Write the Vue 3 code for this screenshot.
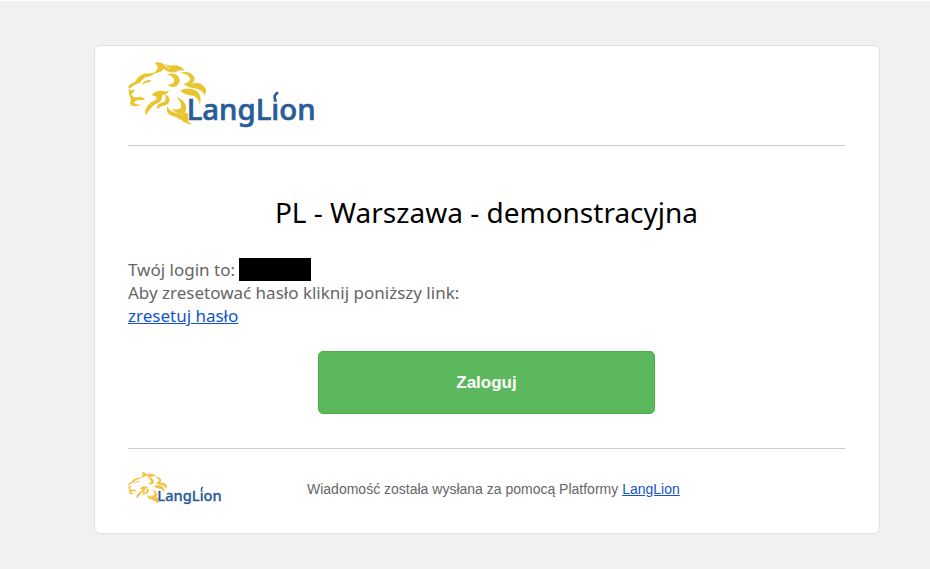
<template>
  <div class="page">
    <main class="card">
      <header class="card-header">
        <svg class="logo" viewBox="24 15 570 210" role="img" aria-label="LangLion">
          <g class="lion">
            <path v-for="(d, i) in lionPaths" :key="i" :d="d" />
          </g>
          <text class="logo-text" x="200" y="196">LangLion</text>
          <circle class="dot-cover" cx="467" cy="125" r="14" />
          <path class="dot-arc" d="M474 112 Q457 122 468 138" />
        </svg>
      </header>

      <section class="content">
        <h1>PL - Warszawa - demonstracyjna</h1>
        <p>
          Twój login to: <span class="redacted"></span><br />
          Aby zresetować hasło kliknij poniższy link:<br />
          <a href="#">zresetuj hasło</a>
        </p>
        <button type="button" class="login">Zaloguj</button>
      </section>

      <footer class="card-footer">
        <svg class="logo-small" viewBox="24 15 570 210" role="img" aria-label="LangLion">
          <g class="lion">
            <path v-for="(d, i) in lionPaths" :key="i" :d="d" />
          </g>
          <text class="logo-text" x="200" y="196">LangLion</text>
          <circle class="dot-cover" cx="467" cy="125" r="14" />
          <path class="dot-arc" d="M474 112 Q457 122 468 138" />
        </svg>
        <span>Wiadomość została wysłana za pomocą Platformy <a href="#">LangLion</a></span>
      </footer>
    </main>
  </div>
</template>

<script setup>
// face first, then the mane from top to bottom
const lionPaths = [
  'M25 97 Q26 86 45 81 Q54 62 76 55 Q95 57 106 52 Q100 64 78 66 Q66 73 60 83 Q44 88 34 97 Q27 104 25 97Z',
  'M69 83 Q78 72 94 76 Q91 84 76 83 L66 91Z',
  'M26 103 Q36 110 44 101 Q43 113 34 116 Q37 128 50 127 Q64 123 75 131 Q72 138 56 135 Q42 137 43 145 Q54 152 66 147 Q52 158 36 152 Q27 148 33 133 Q26 122 26 103Z',
  'M104 24 Q124 17 137 34 Q144 43 160 41 Q148 50 130 42 Q125 54 97 55 Q112 48 113 38 Q113 29 104 24Z',
  'M134 25 Q143 35 160 31 Q180 30 195 47 Q178 43 168 51 Q150 55 135 45 Q147 46 154 41 Q141 38 134 25Z',
  'M140 57 Q166 51 177 67 Q184 84 169 94 Q154 100 142 89 Q162 90 163 76 Q161 64 140 57Z',
  'M180 53 Q210 45 222 65 Q228 79 213 86 Q244 78 256 100 Q262 111 253 120 Q247 105 230 101 Q207 99 190 87 Q208 84 210 72 Q208 57 180 53Z',
  'M180 106 Q207 94 231 108 Q248 125 239 149 Q238 130 219 122 Q195 122 180 106Z',
  'M94 121 Q107 103 129 108 Q141 112 147 105 Q145 118 127 121 Q127 142 107 147 Q91 158 78 181 Q70 169 83 152 Q91 140 109 134 Q113 123 94 121Z',
  'M135 119 Q151 121 148 140 Q143 151 127 153 Q115 158 111 163 Q109 145 131 141 Q140 137 135 119Z',
  'M169 125 Q194 134 198 155 Q201 174 181 178 Q166 174 155 162 Q175 166 183 158 Q186 143 169 125Z',
  'M142 154 Q147 168 165 173 Q187 176 195 188 Q203 201 218 208 Q196 207 185 196 Q168 185 151 181 Q137 172 142 154Z',
  'M184 177 Q197 169 205 177 Q202 185 207 199 Q190 192 184 177Z'
]
</script>

<style>
body {
  margin: 0;
  background: #f1f1f1;
}
</style>

<style scoped>
.page {
  padding: 44px 50px 35px 94px;
  border-top: 1px solid #fff;
  font-family: 'Lucida Grande', 'Noto Sans', sans-serif;
  color: #666;
}

.card {
  padding: 0 34px 0 33px;
  border: 1px solid #e0e0e0;
  border-radius: 6px;
  background: #fff;
}

.card-header {
  padding: 14px 0 15px;
  border-bottom: 1px solid #ccc;
}

.logo,
.logo-small {
  display: block;
  width: 190px;
  height: 70px;
}

.logo-small {
  width: 95px;
  height: 35px;
}

.lion {
  fill: #e8c531;
}

.logo-small .lion {
  fill: #f3c044;
}

.logo-text {
  font-family: 'Noto Sans', sans-serif;
  font-size: 88px;
  font-weight: 500;
  fill: #2a5c9a;
  stroke: #2a5c9a;
  stroke-width: 2px;
}

.dot-cover {
  fill: #fff;
}

.dot-arc {
  fill: none;
  stroke: #2a5c9a;
  stroke-width: 8px;
}

.content {
  padding: 46px 0 34px;
  border-bottom: 1px solid #ccc;
}

h1 {
  margin: 0 0 26px;
  font-size: 28px;
  font-weight: 400;
  line-height: 40px;
  text-align: center;
  color: #000;
}

p {
  margin: 0 0 24px;
  font-size: 17px;
  line-height: 23px;
}

a {
  color: #15c;
}

.redacted {
  display: inline-block;
  width: 72px;
  height: 23px;
  background: #000;
  vertical-align: bottom;
}

.login {
  display: block;
  width: 47%;
  height: 63px;
  margin: 0 auto;
  border: 1px solid #4cae4c;
  border-radius: 5px;
  background: #5cb85c;
  color: #fff;
  font: bold 17px 'Liberation Sans', Arial, sans-serif;
}

.card-footer {
  display: flex;
  align-items: center;
  gap: 84px;
  padding: 22px 0 27px;
  font: 14px 'Liberation Sans', Arial, sans-serif;
}
</style>
